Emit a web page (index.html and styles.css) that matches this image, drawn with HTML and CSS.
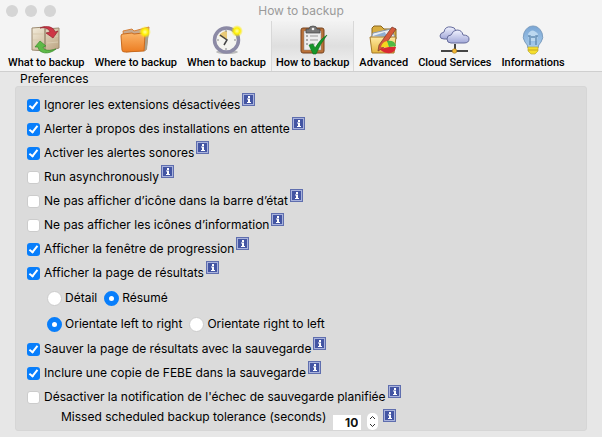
FILE: index.html
```html
<!DOCTYPE html>
<html lang="fr">
<head>
<meta charset="utf-8">
<title>How to backup</title>
<link rel="stylesheet" href="styles.css">
</head>
<body>
<svg class="defs" aria-hidden="true">
  <defs>
    <linearGradient id="folder" x1="0" y1="0" x2="0" y2="1"><stop offset="0" stop-color="#fbb467"/><stop offset="1" stop-color="#ec7d22"/></linearGradient>
    <linearGradient id="yellow" x1="0" y1="0" x2="0" y2="1"><stop offset="0" stop-color="#ffe9a0"/><stop offset="1" stop-color="#e5b640"/></linearGradient>
    <linearGradient id="box" x1="0" y1="0" x2="1" y2="1"><stop offset="0" stop-color="#f4eddc"/><stop offset="1" stop-color="#b9a17d"/></linearGradient>
    <linearGradient id="cloud" x1="0" y1="0" x2="0" y2="1"><stop offset="0" stop-color="#f1f3ff"/><stop offset="1" stop-color="#a2a8d8"/></linearGradient>
    <linearGradient id="bulb" x1="0" y1="0" x2="0" y2="1"><stop offset="0" stop-color="#79a5d4"/><stop offset="1" stop-color="#a9cdec"/></linearGradient>
    <radialGradient id="glow"><stop offset="0" stop-color="#ffffa0"/><stop offset=".5" stop-color="#fff000"/><stop offset="1" stop-color="#ffe800" stop-opacity="0"/></radialGradient>
    <symbol id="info" viewBox="0 0 13 13">
      <path fill="#5f6eae" d="M0 0h13v13H0z"/><path fill="#a9b3dc" d="M1 1h11v11H1z"/><path fill="#4355a3" d="M2 2h9v9H2z"/>
      <path fill="#fff" d="M6 3h2v2H6zM5 5.500h3V9h1v1H5V9h1V6.500H5z"/>
    </symbol>
  </defs>
</svg>
<header class="chrome">
  <div class="titlebar">
    <div class="lights"><i></i><i></i><i></i></div>
    <h1>How to backup</h1>
  </div>
  <nav class="tabs">
    <button type="button" class="tab">
      <svg viewBox="0 0 32 30"><path fill="url(#box)" stroke="#9c8a70" d="M2 3l13-1v24L2 25zM15 4l14-1v20l-14 4z"/><path stroke="#d9cbb0" d="M3 9h11M3 15h11M17 12l11-1M17 18l11-1"/><path fill="#ce3545" stroke="#932431" stroke-width=".7" d="M10 3C17 0 24 2 25 7l3-1-5 7-7-5 4-1c-1-3-4-5-10-4z"/><path fill="#5eb947" stroke="#3b8c2c" stroke-width=".7" d="M26 24c-7 6-17 5-18-2H5l5-6 6 5-3 1c1 4 7 4 13 2z"/></svg>
      <span>What to backup</span>
    </button>
    <button type="button" class="tab">
      <svg viewBox="0 0 32 30"><path fill="#c9a98d" stroke="#d78137" d="M3 6l9-2 2 2 15-4-3 23-20 2z"/><path fill="#a7a18f" d="M26 8l3-3-2 19-3 3z"/><path fill="url(#folder)" stroke="#c86b20" d="M1 11q0-2 2-2l9-1 2 1 9-1q2 0 2 2l-1 16-19 1q-3 0-3-2z"/><circle cx="25" cy="7" r="6" fill="url(#glow)"/></svg>
      <span>Where to backup</span>
    </button>
    <button type="button" class="tab">
      <svg viewBox="0 0 32 30"><ellipse cx="16" cy="27" rx="11" ry="2" fill="#bbb"/><circle cx="15.500" cy="15" r="12" fill="#f4f4ef" stroke="#8c8aa5" stroke-width="3.500"/><path fill="#e8c977" d="M16 15L8 11q3-5 8-5z"/><path fill="none" stroke="#444" stroke-width="1.500" d="M9 10l7 5-3 5"/><path stroke="#888" d="M15 5v2M15 23v2M6 15h2M23 15h2"/><circle cx="26" cy="6" r="6" fill="url(#glow)"/></svg>
      <span>When to backup</span>
    </button>
    <button type="button" class="tab selected" aria-current="page">
      <svg viewBox="0 0 32 30"><rect x="4" y="3" width="23" height="25" rx="2" fill="#ba7138" stroke="#774521"/><path fill="#eee" stroke="#888" stroke-width=".5" d="M7 6h17v19H7z"/><path fill="#777" stroke="#444" stroke-width=".7" d="M9 8V4h3q0-3 4-3t4 3h3v4z"/><circle cx="16" cy="4" r="1.300" fill="#eee"/><path stroke="#666" d="M9 11h2M9 15h2M9 19h2"/><path stroke="#999" d="M13 11h8M13 15h8M13 19h5M13 22h4"/><path fill="#16952a" stroke="#08701a" stroke-width=".6" d="M12 20l4-1 2 4q5-9 12-13-7 9-11 19h-3z"/></svg>
      <span>How to backup</span>
    </button>
    <button type="button" class="tab">
      <svg viewBox="0 0 32 30"><path fill="#d9ae40" stroke="#89651d" d="M4 12V3l2-2h7l3 3h12v10z"/><path fill="#e9eef4" stroke="#8a99ad" d="M5 8l18-4 5 10H3z"/><path fill="#91aed0" d="M5 11l12-4 2 5z"/><path fill="url(#yellow)" stroke="#a47827" d="M2 12h26l-2 16H4z"/><path fill="#d65a3b" stroke="#75382b" stroke-width=".7" d="M24 2l4 2-13 19-5 3 1-6z"/><path fill="#d92932" d="M21 22h7q-1 7-9 6-5-1-7-4z"/><path fill="#f5d81e" d="M21 22l-2-6q-5 1-6 6z"/><path fill="#50b943" d="M21 22l7-1q-1-6-9-5z"/></svg>
      <span>Advanced</span>
    </button>
    <button type="button" class="tab">
      <svg viewBox="0 0 32 30"><path fill="url(#cloud)" stroke="#666c9c" d="M5 14q-4 0-4-3t4-4q1-6 7-5 4 0 5 4 4 0 4 4t-4 4z"/><path fill="url(#cloud)" stroke="#666c9c" d="M12 18q-4 0-4-4t4-4q2-5 6-5 5 0 6 5 6 0 6 4t-5 4z"/><path fill="none" stroke="#454545" stroke-width="2" d="M2 26h27M16 19v7"/><circle cx="15.500" cy="26" r="2.300" fill="#f2b632" stroke="#9b711f" stroke-width=".6"/></svg>
      <span>Cloud Services</span>
    </button>
    <button type="button" class="tab">
      <svg viewBox="0 0 32 30"><path fill="url(#bulb)" stroke="#7c9dbf" d="M11 23q0-3-3-6-3-4-1-9 3-7 9-7t9 7q2 5-1 9-3 3-3 6z"/><path fill="#bcd8f0" d="M11 9q4-7 10 0l-1 7h-8z"/><path fill="none" stroke="#668eb5" stroke-width="1.500" d="M13 20v-9h-2M19 20v-9h2M14 12h4"/><path fill="#f6df2d" stroke="#b9aa39" stroke-width=".7" d="M11 22h10v4l-3 3h-4l-3-3z"/><path stroke="#c4a526" d="M11 25h10"/></svg>
      <span>Informations</span>
    </button>
  </nav>
</header>
<main>
  <fieldset>
    <legend>Preferences</legend>
    <div class="panel">
      <div class="row"><label><input type="checkbox" checked>Ignorer les extensions désactivées</label><svg class="info"><use href="#info"/></svg></div>
      <div class="row"><label><input type="checkbox" checked>Alerter à propos des installations en attente</label><svg class="info"><use href="#info"/></svg></div>
      <div class="row"><label><input type="checkbox" checked>Activer les alertes sonores</label><svg class="info"><use href="#info"/></svg></div>
      <div class="row"><label><input type="checkbox">Run asynchronously</label><svg class="info"><use href="#info"/></svg></div>
      <div class="row"><label><input type="checkbox">Ne pas afficher d’icône dans la barre d’état</label><svg class="info"><use href="#info"/></svg></div>
      <div class="row"><label><input type="checkbox">Ne pas afficher les icônes d’information</label><svg class="info"><use href="#info"/></svg></div>
      <div class="row"><label><input type="checkbox" checked>Afficher la fenêtre de progression</label><svg class="info"><use href="#info"/></svg></div>
      <div class="row"><label><input type="checkbox" checked>Afficher la page de résultats</label><svg class="info"><use href="#info"/></svg></div>
      <div class="row radios"><label><input type="radio" name="detail">Détail</label><label><input type="radio" name="detail" checked>Résumé</label></div>
      <div class="row radios"><label><input type="radio" name="orient" checked>Orientate left to right</label><label><input type="radio" name="orient">Orientate right to left</label></div>
      <div class="row"><label><input type="checkbox" checked>Sauver la page de résultats avec la sauvegarde</label><svg class="info"><use href="#info"/></svg></div>
      <div class="row"><label><input type="checkbox" checked>Inclure une copie de FEBE dans la sauvegarde</label><svg class="info"><use href="#info"/></svg></div>
      <div class="row"><label><input type="checkbox">Désactiver la notification de l'échec de sauvegarde planifiée</label><svg class="info"><use href="#info"/></svg></div>
      <div class="row tolerance">
        <label for="tolerance">Missed scheduled backup tolerance (seconds)</label>
        <input id="tolerance" type="text" inputmode="numeric" value="10">
        <button type="button" class="stepper" aria-label="Seconds"><svg viewBox="0 0 10 17"><path d="M2.500 6L5 3.500 7.500 6M2.500 11L5 13.500 7.500 11"/></svg></button>
        <svg class="info"><use href="#info"/></svg>
      </div>
    </div>
  </fieldset>
</main>
</body>
</html>
```
FILE: styles.css
```css
*, *::before { box-sizing: border-box; }
body {
  margin: 0;
  min-height: 100vh;
  background: #e7e7e7;
  color: #000;
  font: 400 12px/16px Inter, "Liberation Sans", sans-serif;
}
.defs { position: absolute; width: 0; height: 0; }
.chrome { background: #f4f4f4; border-bottom: 1px solid #cfcfcf; }
.titlebar {
  display: grid;
  grid-template-columns: 1fr auto 1fr;
  align-items: center;
  height: 21px;
  padding: 0 6px;
}
.lights { display: flex; gap: 7px; }
.lights i { width: 12px; height: 12px; border-radius: 50%; background: #d5d5d5; }
h1 { margin: 0; font-size: 12px; font-weight: 400; color: #9a9a9a; }
.tabs { display: flex; padding: 0 3px; }
.tab {
  display: flex;
  flex-direction: column;
  align-items: center;
  height: 50px;
  padding: 4px 5px 0 4px;
  border: 0;
  border-left: 1px solid transparent;
  background: none;
  color: #000;
  font: 500 11px/15px Roboto, "Liberation Sans", sans-serif;
  white-space: nowrap;
}
.tab svg { width: 32px; height: 30px; }
.selected {
  background: linear-gradient(#f3f3f3, #dfdfdf 50%, #f3f3f3);
  border-left-color: #d8d8d8;
  box-shadow: inset -1px 0 #d8d8d8;
}
fieldset { margin: 0 15px; padding: 0; border: 0; min-width: 0; }
legend { padding: 0 5px; line-height: 14px; }
.panel {
  padding: 6px 11px 0;
  border-radius: 3px;
  background: #dbdbdb;
  border: 1px solid #d6d6d6;
}
.row { display: flex; align-items: center; height: 24px; white-space: nowrap; }
label { display: flex; align-items: center; gap: 4px; }
.info { width: 13px; height: 13px; margin: 0 0 11px 2px; }
input[type="checkbox"], input[type="radio"] {
  appearance: none;
  flex: none;
  margin: 0;
  background: #fff;
  border: 1px solid #ccc;
}
input[type="checkbox"] { width: 13px; height: 13px; border-radius: 3px; }
input[type="checkbox"]:checked { display: flow-root; border: 0; background: #087efb; }
input[type="checkbox"]:checked::before {
  content: "";
  display: block;
  width: 5px;
  height: 9px;
  margin: 1px 0 0 4px;
  border: solid #fff;
  border-width: 0 2px 2px 0;
  transform: rotate(38deg);
}
input[type="radio"] { width: 15px; height: 15px; border-radius: 50%; }
input[type="radio"]:checked { border: 5px solid #087efb; }
.radios { height: 26px; padding-left: 20px; gap: 7px; }
.radios label { gap: 3px; }
.tolerance { height: 21px; padding-left: 34px; align-items: flex-start; }
.tolerance input {
  width: 28px;
  height: 15px;
  margin: 6px 6px 0 7px;
  padding: 0 3px 0 0;
  border: 0;
  background: #fff;
  color: #111;
  text-align: right;
  font: 700 12px/15px Inter, "Liberation Sans", sans-serif;
}
.stepper {
  width: 11px;
  height: 17px;
  margin: 4px 0 0;
  padding: 0;
  border: 0;
  border-radius: 5px;
  background: #fff;
}
.stepper svg { display: block; width: 11px; height: 17px; fill: none; stroke: #333; }
.tolerance .info { margin: 0 0 0 5px; }
```
